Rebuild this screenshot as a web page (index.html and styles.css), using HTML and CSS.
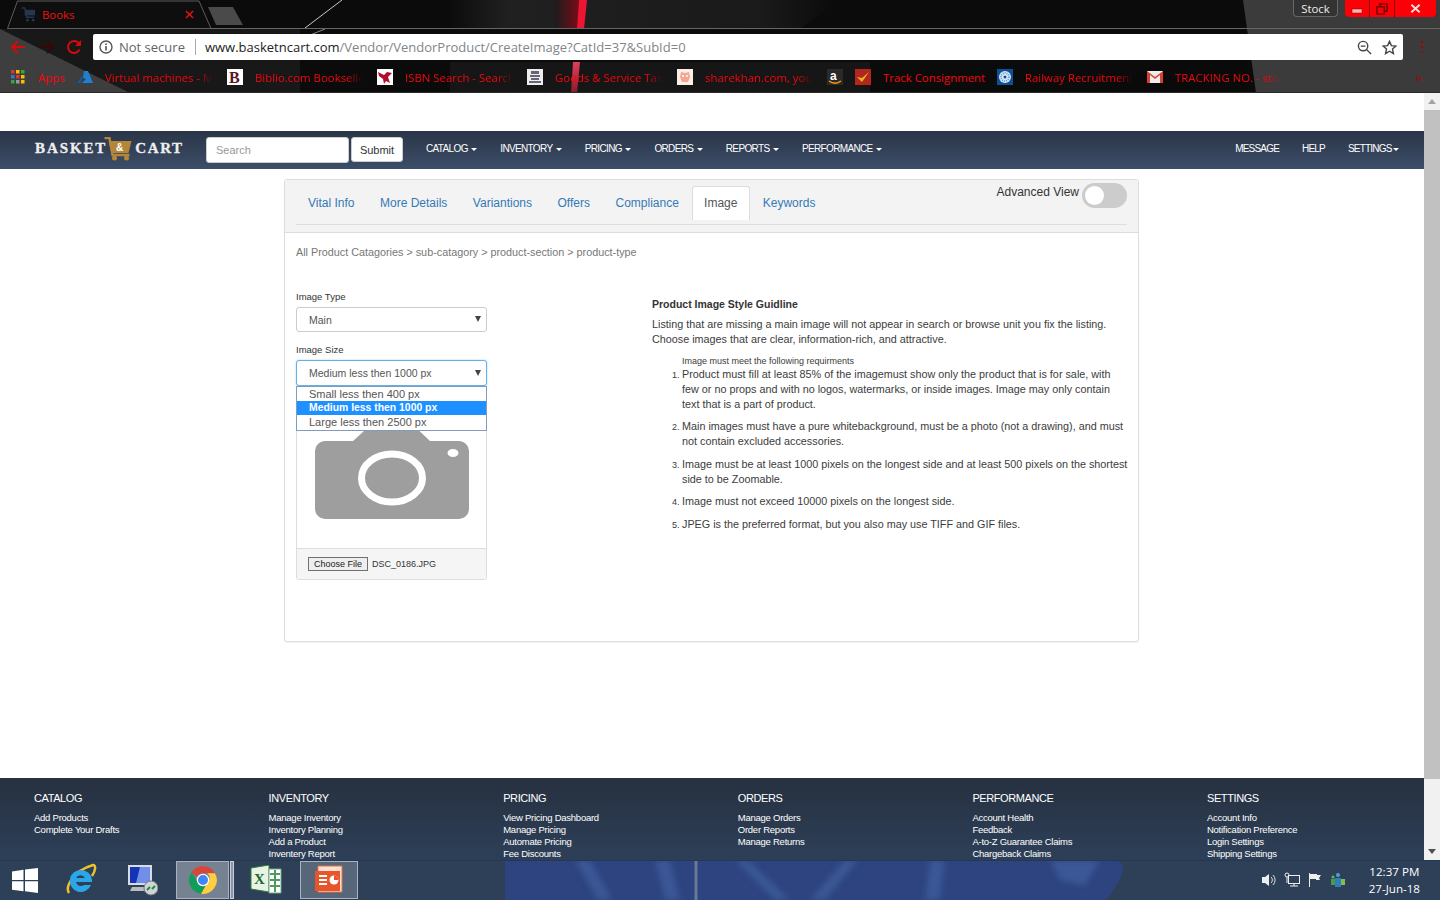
FILE: index.html
```html
<!DOCTYPE html>
<html lang="en">
<head>
<meta charset="utf-8">
<title>Books</title>
<link rel="stylesheet" href="styles.css">
</head>
<body>
<header class="browser">
  <svg class="browser-bg" viewBox="0 0 1440 93" preserveAspectRatio="none" aria-hidden="true">
    <defs>
      <linearGradient id="glow" x1="0" x2="1" y1="0" y2="0">
        <stop offset="0" stop-color="#1c1c1c"/><stop offset="1" stop-color="#7a0c18"/>
      </linearGradient>
      <linearGradient id="top" x1="0" x2="1" y1="0" y2="0">
        <stop offset="0" stop-color="#0c0c0c"/><stop offset=".15" stop-color="#202020"/><stop offset=".8" stop-color="#1a1a1a"/><stop offset="1" stop-color="#0a0a0a"/>
      </linearGradient>
      <linearGradient id="lower" x1="0" x2="0" y1="0" y2="1">
        <stop offset="0" stop-color="#e0405a"/><stop offset="1" stop-color="#8a1a2c"/>
      </linearGradient>
    </defs>
    <rect width="1440" height="93" fill="#0b0b0b"/>
    <rect x="0" y="29" width="300" height="64" fill="#181818"/>
    <polygon points="0,29 130,93 0,93" fill="#3e3e3e"/>
    <polygon points="450,0 840,0 800,29 450,29" fill="url(#top)"/>
    <rect x="450" y="62" width="420" height="31" fill="#161616"/>
    <polygon points="1243,0 1440,0 1440,93 1256,93" fill="#3b3b3b"/>
    <polygon points="1090,93 1246,93 1244,30" fill="#0a0a0a"/>
    <polygon points="555,0 579,0 577,29 555,29" fill="url(#glow)"/>
    <polygon points="579,0 587,0 584,29 577,29" fill="#ee1433"/>
    <polygon points="573,62 580,62 577,93 571,93" fill="url(#lower)"/>
    <polyline points="305,28 342,0" stroke="#c8c8c8" fill="none"/>
    <polyline points="278,48 325,29" stroke="#8a8a8a" fill="none"/>
    <polygon points="7.500,28.500 17.500,1 199,1 211,28.500" fill="#0e0e0e" stroke="#5c5c5c"/>
    <line x1="211" y1="28.500" x2="1440" y2="28.500" stroke="#666"/>
  </svg>
  <div class="tabstrip">
    <div class="tab">
      <svg class="tab-icon" viewBox="0 0 16 16" aria-hidden="true"><path d="M1 1h3l2 10h8" fill="none" stroke="#26364f" stroke-width="1.500"/><rect x="4" y="3" width="11" height="6" fill="#26364f"/><circle cx="7" cy="14" r="1.500" fill="#26364f"/><circle cx="13" cy="14" r="1.500" fill="#26364f"/></svg>
      <span class="tab-title">Books</span>
      <svg class="tab-close" viewBox="0 0 10 10" aria-hidden="true"><path d="M1 1l8 8M9 1l-8 8" stroke="#f01010" stroke-width="1.500"/></svg>
    </div>
    <div class="newtab"></div>
    <div class="winctl">
      <div class="stock">Stock</div>
      <div class="winbtns">
        <div class="winbtn win-min"><svg viewBox="0 0 12 6" aria-hidden="true"><rect x="1" y="1" width="10" height="4" fill="#f6b6b6" stroke="#8a0000" stroke-width=".5"/></svg></div>
        <div class="winbtn win-max"><svg viewBox="0 0 13 13" aria-hidden="true"><path d="M4 1h8v8h-3V4H4zM1 4h8v8H1z" fill="none" stroke="#700" stroke-width="1.600"/></svg></div>
        <div class="winbtn win-close"><svg viewBox="0 0 12 9" aria-hidden="true"><path d="M1.500 .5l9 8M10.500 .5l-9 8" stroke="#fdd" stroke-width="2.200"/></svg></div>
      </div>
    </div>
  </div>
  <div class="toolbar">
    <svg class="tool tool-back" viewBox="0 0 16 16" aria-hidden="true"><path d="M15 8H2M8 2L2 8l6 6" fill="none" stroke="#d60a0a" stroke-width="2"/></svg>
    <svg class="tool tool-fwd" viewBox="0 0 16 16" aria-hidden="true"><path d="M1 8h13M8 2l6 6-6 6" fill="none" stroke="#380808" stroke-width="2"/></svg>
    <svg class="tool tool-reload" viewBox="0 0 16 16" aria-hidden="true"><path d="M13.500 10.500A6 6 0 1 1 12.500 4" fill="none" stroke="#d60a0a" stroke-width="2"/><path d="M15 1v6H9z" fill="#d60a0a"/></svg>
    <div class="omnibox">
      <svg class="omni-info" viewBox="0 0 14 14" aria-hidden="true"><circle cx="7" cy="7" r="6" fill="none" stroke="#555" stroke-width="1.400"/><rect x="6.200" y="6" width="1.600" height="4.500" fill="#555"/><rect x="6.200" y="3.400" width="1.600" height="1.600" fill="#555"/></svg>
      <span class="omni-secure">Not secure</span>
      <span class="omni-sep"></span>
      <span class="omni-url"><b>www.basketncart.com</b>/Vendor/VendorProduct/CreateImage?CatId=37&amp;SubId=0</span>
      <svg class="omni-zoom" viewBox="0 0 16 16" aria-hidden="true"><circle cx="6.500" cy="6.500" r="5" fill="none" stroke="#444" stroke-width="1.500"/><path d="M4 6.500h5M10 10l5 5" stroke="#444" stroke-width="1.500"/></svg>
      <svg class="omni-star" viewBox="0 0 16 16" aria-hidden="true"><path d="M8 1.500l2 4.500 4.800.5-3.600 3.200 1 4.800L8 12l-4.200 2.500 1-4.800L1.200 6.500 6 6z" fill="none" stroke="#444" stroke-width="1.500"/></svg>
    </div>
    <svg class="tool-menu" viewBox="0 0 4 14" aria-hidden="true"><rect x="1" y="1" width="2" height="2" fill="#a00"/><rect x="1" y="6" width="2" height="2" fill="#a00"/><rect x="1" y="11" width="2" height="2" fill="#a00"/></svg>
  </div>
  <nav class="bookmarks">
    <svg class="bm-apps" viewBox="0 0 14 14" aria-hidden="true">
      <rect width="3.500" height="3.500" fill="#d33"/><rect x="5" width="3.500" height="3.500" fill="#fb0"/><rect x="10" width="3.500" height="3.500" fill="#3a3"/>
      <rect y="5" width="3.500" height="3.500" fill="#37c"/><rect x="5" y="5" width="3.500" height="3.500" fill="#d33"/><rect x="10" y="5" width="3.500" height="3.500" fill="#fb0"/>
      <rect y="10" width="3.500" height="3.500" fill="#3a3"/><rect x="5" y="10" width="3.500" height="3.500" fill="#999"/><rect x="10" y="10" width="3.500" height="3.500" fill="#fb0"/>
    </svg>
    <span class="bm-apps-text">Apps</span>
    <div class="bm bm-first">
      <svg class="bm-icon" viewBox="0 0 16 16" aria-hidden="true"><path d="M7 2h4l5 12H5l4-4-3-1z" fill="#1f7fd0"/><path d="M6 5L0 14h4z" fill="#0f5aa0"/></svg>
      <span class="bm-text">Virtual machines - M</span>
    </div>
    <div class="bm">
      <svg class="bm-icon" viewBox="0 0 16 16" aria-hidden="true"><rect width="16" height="16" fill="#fff"/><text x="2" y="14" class="fav-b">B</text></svg>
      <span class="bm-text">Biblio.com Bookselle</span>
    </div>
    <div class="bm">
      <svg class="bm-icon" viewBox="0 0 16 16" aria-hidden="true"><rect width="16" height="16" fill="#fff"/><path d="M1 3l6 3 3-3 5 1-4 4 2 6-4-2-2 3-1-5-4-3z" fill="#b30c2e"/></svg>
      <span class="bm-text">ISBN Search - Search</span>
    </div>
    <div class="bm">
      <svg class="bm-icon" viewBox="0 0 16 16" aria-hidden="true"><rect width="16" height="16" fill="#eee"/><path d="M4 2h8v3H4zM3 6h10v2H3zM4 9h8v2H4zM2 12h12v2H2z" fill="#667"/></svg>
      <span class="bm-text">Goods &amp; Service Tax</span>
    </div>
    <div class="bm">
      <svg class="bm-icon" viewBox="0 0 16 16" aria-hidden="true"><rect width="16" height="16" fill="#fdeee8"/><path d="M4 3l4 1 4-1 1 5-2 5H5L3 8z" fill="#f6a690"/><circle cx="6" cy="7" r="1" fill="#fff"/><circle cx="10" cy="7" r="1" fill="#fff"/></svg>
      <span class="bm-text">sharekhan.com, your</span>
    </div>
    <div class="bm bm-icononly">
      <svg class="bm-icon" viewBox="0 0 16 16" aria-hidden="true"><rect width="16" height="16" fill="#2a2a2a"/><text x="3" y="10.500" class="fav-a">a</text><path d="M2 12c4 3 8 3 12 0" fill="none" stroke="#f90" stroke-width="1.500"/></svg>
    </div>
    <div class="bm bm-track-item">
      <svg class="bm-icon" viewBox="0 0 16 16" aria-hidden="true"><rect width="16" height="16" fill="#b3261e"/><path d="M2 8l5 5 7-10-7 6z" fill="#e8b12a"/></svg>
      <span class="bm-text bm-track">Track Consignment</span>
    </div>
    <div class="bm">
      <svg class="bm-icon" viewBox="0 0 16 16" aria-hidden="true"><rect width="16" height="16" fill="#0c4f9a"/><circle cx="8" cy="8" r="6" fill="#dfeaf5"/><circle cx="8" cy="8" r="4" fill="none" stroke="#6a9ccb" stroke-width="2" stroke-dasharray="1 1"/><circle cx="8" cy="8" r="1.500" fill="#0c4f9a"/></svg>
      <span class="bm-text">Railway Recruitment</span>
    </div>
    <div class="bm">
      <svg class="bm-icon" viewBox="0 0 16 16" aria-hidden="true"><rect y="2" width="16" height="12" fill="#eee"/><path d="M0 2l8 6 8-6v12h-3V6L8 10 3 6v8H0z" fill="#d8402f"/></svg>
      <span class="bm-text">TRACKING NO. - sto</span>
    </div>
    <span class="bm-more">»</span>
  </nav>
</header>

<div class="viewport">
  <div class="page">
    <div class="topgap"></div>
    <nav class="navbar">
      <a class="logo"><span class="logo-word">BASKET</span>
        <svg class="logo-cart" viewBox="0 0 28 24" aria-hidden="true"><path d="M0 1h5l3 17h17" fill="none" stroke="#b3863a" stroke-width="2.400"/><path d="M4 4h23l-3 12H7z" fill="#b3863a"/><circle cx="10" cy="21" r="2.500" fill="#b3863a"/><circle cx="22" cy="21" r="2.500" fill="#b3863a"/><text x="11.500" y="14" class="logo-amp">&amp;</text></svg>
        <span class="logo-word logo-word-2">CART</span></a>
      <input class="nav-search" type="text" placeholder="Search">
      <button class="nav-submit" type="button">Submit</button>
      <ul class="nav-menu">
        <li>CATALOG <i class="caret"></i></li>
        <li>INVENTORY <i class="caret"></i></li>
        <li>PRICING <i class="caret"></i></li>
        <li>ORDERS <i class="caret"></i></li>
        <li>REPORTS <i class="caret"></i></li>
        <li>PERFORMANCE <i class="caret"></i></li>
      </ul>
      <ul class="nav-menu nav-right">
        <li>MESSAGE</li>
        <li>HELP</li>
        <li>SETTINGS<i class="caret"></i></li>
      </ul>
    </nav>

    <main class="card">
      <div class="card-head">
        <div class="tabrow">
          <ul class="tabs">
            <li>Vital Info</li>
            <li>More Details</li>
            <li>Variantions</li>
            <li>Offers</li>
            <li>Compliance</li>
            <li class="active">Image</li>
            <li>Keywords</li>
          </ul>
          <div class="adv">
            <span>Advanced View</span>
            <span class="toggle"><span class="knob"></span></span>
          </div>
        </div>
      </div>
      <div class="card-body">
        <p class="crumbs">All Product Catagories &gt; sub-catagory &gt; product-section &gt; product-type</p>
        <div class="cols">
          <form class="form">
            <label class="lbl">Image Type</label>
            <div class="sel">Main<i class="sel-arrow"></i></div>
            <label class="lbl lbl-2">Image Size</label>
            <div class="sel-wrap">
              <div class="sel sel-focus">Medium less then 1000 px<i class="sel-arrow"></i></div>
              <ul class="sel-menu">
                <li>Small less then 400 px</li>
                <li class="on">Medium less then 1000 px</li>
                <li>Large less then 2500 px</li>
              </ul>
            </div>
            <div class="imgbox">
              <div class="imgbox-pic">
                <svg class="camera" viewBox="0 0 154 120" aria-hidden="true">
                  <path d="M10 37h28l22-20h34l21 20h29a10 10 0 0 1 10 10v58a10 10 0 0 1-10 10H10a10 10 0 0 1-10-10V47a10 10 0 0 1 10-10z" fill="#9e9e9e"/>
                  <ellipse cx="77" cy="74" rx="30.500" ry="24" fill="#9e9e9e" stroke="#fff" stroke-width="7"/>
                  <ellipse cx="138" cy="49" rx="5.500" ry="4" fill="#fff"/>
                </svg>
              </div>
              <div class="imgbox-foot">
                <button class="choose" type="button">Choose File</button>
                <span class="filename">DSC_0186.JPG</span>
              </div>
            </div>
          </form>
          <section class="guide">
            <h4>Product Image Style Guidline</h4>
            <p>Listing that are missing a main image will not appear in search or browse unit you fix the listing.<br>Choose images that are clear, information-rich, and attractive.</p>
            <div class="guide-small">Image must meet the following requirments</div>
            <ol>
              <li>Product must fill at least 85% of the imagemust show only the product that is for sale, with few or no props and with no logos, watermarks, or inside images. Image may only contain text that is a part of product.</li>
              <li>Main images must have a pure whitebackground, must be a photo (not a drawing), and must not contain excluded accessories.</li>
              <li>Image must be at least 1000 pixels on the longest side and at least 500 pixels on the shortest side to be Zoomable.</li>
              <li>Image must not exceed 10000 pixels on the longest side.</li>
              <li>JPEG is the preferred format, but you also may use TIFF and GIF files.</li>
            </ol>
          </section>
        </div>
      </div>
    </main>

    <div class="spacer"></div>

    <footer class="footer">
      <div class="fcol"><h5>CATALOG</h5><a>Add Products</a><a>Complete Your Drafts</a></div>
      <div class="fcol"><h5>INVENTORY</h5><a>Manage Inventory</a><a>Inventory Planning</a><a>Add a Product</a><a>Inventery Report</a></div>
      <div class="fcol"><h5>PRICING</h5><a>View Pricing Dashboard</a><a>Manage Pricing</a><a>Automate Pricing</a><a>Fee Discounts</a></div>
      <div class="fcol"><h5>ORDERS</h5><a>Manage Orders</a><a>Order Reports</a><a>Manage Returns</a></div>
      <div class="fcol"><h5>PERFORMANCE</h5><a>Account Health</a><a>Feedback</a><a>A-to-Z Guarantee Claims</a><a>Chargeback Claims</a></div>
      <div class="fcol"><h5>SETTINGS</h5><a>Account Info</a><a>Notification Preference</a><a>Login Settings</a><a>Shipping Settings</a></div>
    </footer>
  </div>
  <div class="scrollbar">
    <div class="sb-btn"><i class="sb-up"></i></div>
    <div class="sb-track"><div class="sb-thumb"></div></div>
    <div class="sb-btn"><i class="sb-down"></i></div>
  </div>
</div>

<div class="taskbar">
  <svg class="task-bg" viewBox="0 0 1440 40" preserveAspectRatio="none" aria-hidden="true">
    <defs>
      <filter id="soft" x="-20%" y="-20%" width="140%" height="140%"><feGaussianBlur stdDeviation="3"/></filter>
      <clipPath id="jacket"><path d="M505 0H1116Q1126 4 1122 14Q1116 28 1106 40H505z"/></clipPath>
    </defs>
    <path d="M505 0H1116Q1126 4 1122 14Q1116 28 1106 40H505z" fill="#2d4480"/>
    <g clip-path="url(#jacket)"><g filter="url(#soft)" fill="#43609f" opacity=".7">
      <polygon points="575,0 590,0 612,40 598,40"/>
      <polygon points="655,0 670,0 680,40 665,40"/>
      <polygon points="735,0 748,0 790,40 775,40"/>
      <polygon points="845,0 858,0 825,40 810,40"/>
      <polygon points="930,0 945,0 940,40 925,40"/>
      <polygon points="1050,0 1100,0 1085,26 1060,20"/>
    </g></g>
    <rect class="task-zip" x="694.500" y="0" width="3" height="40"/>
    <rect x="0" y="0" width="1440" height="1" fill="#26384e"/>
  </svg>
  <svg class="t-win" viewBox="0 0 26 25" aria-hidden="true"><path d="M0 3.500l11.500-1.700V12H0zM13 1.600L26 0v12H13zM0 13.300h11.500v10L0 21.700zM13 13.300h13V25l-13-1.800z" fill="#fff"/></svg>
  <svg class="t-app t-ie" viewBox="0 0 32 34" aria-hidden="true">
    <path d="M4 30C0 24 8 8 28 2c3 0 3 5-1 11" fill="none" stroke="#eec22a" stroke-width="2.500"/>
    <path d="M16 7a11 11 0 1 0 10 15h-7a5 5 0 0 1-8-3h16V17A11 11 0 0 0 16 7zm-5 8a5 5 0 0 1 9 0z" fill="#2ba7e8"/>
  </svg>
  <svg class="t-app t-rdp" viewBox="0 0 32 34" aria-hidden="true">
    <rect x="2" y="2" width="24" height="20" fill="#d7dbe2"/><rect x="4" y="4" width="20" height="16" fill="#1533b5"/><path d="M14 4h10v16H10z" fill="#6f8fe8"/>
    <path d="M6 24h18l2 4H4z" fill="#bbb"/><circle cx="25" cy="25" r="7" fill="#cfd4d8" stroke="#777"/><path d="M21 27l3-3M26 26l3-3" stroke="#1f8a3c" stroke-width="2"/>
  </svg>
  <div class="t-box t-chrome">
    <svg class="t-icon" viewBox="0 0 48 48" aria-hidden="true">
      <path d="M24 2a22 22 0 0 1 19 11H24a11 11 0 0 0-10 6L6 11A22 22 0 0 1 24 2z" fill="#db4437"/>
      <path d="M6 11l9 16a11 11 0 0 0 13 6l-7 13A22 22 0 0 1 6 11z" fill="#0f9d58"/>
      <path d="M43 13a22 22 0 0 1-22 33l9-16a11 11 0 0 0 1-17z" fill="#ffcd40"/>
      <circle cx="24" cy="24" r="9" fill="#4285f4" stroke="#fff" stroke-width="2"/>
    </svg>
  </div>
  <div class="t-sliver"></div>
  <svg class="t-app t-xl" viewBox="0 0 32 30" aria-hidden="true">
    <path d="M1 3l18-3v27L1 24z" fill="#e9f3e5" stroke="#2d7d3c"/><path d="M19 4h12v24H19z" fill="#fff" stroke="#6fa87a"/><path d="M20 9h10M20 15h10M20 21h10M25 5v22" stroke="#4f9a5e" stroke-width="2"/>
    <text x="4" y="19" class="fav-x">X</text>
  </svg>
  <div class="t-box t-ppt">
    <svg class="t-icon-ppt" viewBox="0 0 30 30" aria-hidden="true">
      <path d="M4 1h24v26H4z" fill="#fbe0d5" stroke="#e87040"/><path d="M1 6h25v20H1z" fill="#e8552a"/>
      <path d="M5 11h8M5 15h8M5 19h8" stroke="#fff" stroke-width="1.800"/><circle cx="20" cy="15" r="4.500" fill="#fff"/><path d="M20 15v-4.500a4.500 4.500 0 0 1 4.500 4.500z" fill="#e8552a"/>
    </svg>
  </div>
  <div class="tray">
    <svg class="tray-i" viewBox="0 0 16 16" aria-hidden="true"><path d="M1 5h3l4-3v12l-4-3H1z" fill="#eee"/><path d="M10 5a4 4 0 0 1 0 6M12 3a7 7 0 0 1 0 10" fill="none" stroke="#ddd"/></svg>
    <svg class="tray-i" viewBox="0 0 16 16" aria-hidden="true"><rect x="4.500" y="3.500" width="11" height="8" fill="none" stroke="#eee"/><path d="M6 14h8M10 12v2" stroke="#eee"/><circle cx="3" cy="3" r="2" fill="none" stroke="#eee"/><path d="M3 5v6" stroke="#eee"/></svg>
    <svg class="tray-i" viewBox="0 0 16 16" aria-hidden="true"><path d="M2.500 1v14" stroke="#eee"/><path d="M3 2h7v1h4l-2 3 1 2H9V7H3z" fill="#eee"/></svg>
    <svg class="tray-i" viewBox="0 0 16 16" aria-hidden="true"><circle cx="8" cy="3" r="2" fill="#5b9bd5"/><path d="M5 6h6v9H5z" fill="#2d7fb8"/><circle cx="3" cy="5" r="1.500" fill="#5cb85c"/><path d="M1 7h4v6H1z" fill="#4a9a4a"/><path d="M11 7h4v6h-4z" fill="#7fbf4a"/></svg>
    <div class="clock"><span>12:37 PM</span><span>27-Jun-18</span></div>
  </div>
</div>
</body>
</html>
```
FILE: styles.css
```css
* { box-sizing: border-box; }
html, body { margin: 0; height: 900px; overflow: hidden; }
body { display: flex; flex-direction: column; font-family: "Liberation Sans", Arial, sans-serif; background: #fff; color: #333; }
ul, ol { margin: 0; padding: 0; list-style: none; }
p, h4, h5 { margin: 0; }

/* Browser frame */
.browser { position: relative; height: 93px; flex: none; overflow: hidden; border-bottom: 1px solid #2a2a2a; }
.browser-bg { position: absolute; left: 0; top: 0; width: 1440px; height: 93px; }
.tabstrip, .toolbar, .bookmarks { position: relative; display: flex; align-items: center; }
.tabstrip { height: 29px; }
.tab { width: 208px; height: 29px; display: flex; align-items: center; padding: 0 14px 0 21px; }
.tab-icon { width: 15px; height: 15px; }
.tab-title { margin-left: 6px; flex: 1; font: 11.400px "Open Sans", sans-serif; color: #f01010; }
.tab-close { width: 9px; height: 9px; }
.newtab { width: 35px; height: 18px; align-self: flex-start; margin-top: 7px; background: #4a4a4a; clip-path: polygon(0 0, 25px 0, 35px 18px, 8px 18px); }
.winctl { margin-left: auto; margin-right: 4px; align-self: flex-start; display: flex; gap: 7px; }
.stock { width: 45px; height: 17px; border: 1px solid #666; border-top: 0; border-radius: 0 0 4px 4px; background: #333; color: #eee; font: 11.400px/18px "Open Sans", sans-serif; text-align: center; }
.winbtns { display: flex; height: 17px; border-radius: 0 0 4px 4px; overflow: hidden; background: #8a0000; gap: 1px; }
.winbtn { display: flex; align-items: center; justify-content: center; background: #fb0007; }
.win-min { width: 24px; } .win-min svg { width: 12px; height: 6px; margin-top: 5px; }
.win-max { width: 24px; } .win-max svg { width: 12px; height: 12px; }
.win-close { width: 41px; } .win-close svg { width: 11px; height: 9px; }

.toolbar { height: 33px; padding: 3px 0 0 10px; }
.tool { width: 16px; height: 16px; flex: none; }
.tool-fwd { margin-left: 13px; }
.tool-reload { margin-left: 11px; }
.omnibox { margin-left: 11px; width: 1310px; height: 26px; display: flex; align-items: center; padding: 0 6px; background: #fff; border-radius: 2px; font: 13px "Open Sans", sans-serif; color: #80868b; }
.omni-info { width: 14px; height: 14px; flex: none; }
.omni-secure { margin-left: 6px; color: #5f6368; }
.omni-sep { width: 1px; height: 16px; background: #aaa; margin: 0 9px 0 10px; }
.omni-url b { font-weight: 400; color: #222; }
.omni-zoom { margin-left: auto; width: 15px; height: 15px; }
.omni-star { margin-left: 10px; width: 15px; height: 15px; }
.tool-menu { margin-left: 17px; width: 4px; height: 14px; }

.bookmarks { height: 30px; padding-left: 11px; font: 11.400px "Open Sans", sans-serif; color: #f5050f; }
.bm-apps { width: 14px; height: 14px; flex: none; }
.bm-apps-text { margin-left: 13px; width: 28px; flex: none; }
.bm { display: flex; align-items: center; flex: none; margin-right: 14px; }
.bm-first { margin-left: 11px; }
.bm-icon { width: 16px; height: 16px; flex: none; }
.bm-text { margin-left: 12px; width: 108px; white-space: nowrap; mask-image: linear-gradient(90deg, #000 85%, transparent); }
.bm-icononly { margin-right: 12px; }
.bm-track-item { margin-right: 12px; }
.bm-track { width: 102px; mask-image: none; }
.bm-more { margin-left: auto; margin-right: 18px; font-size: 13px; color: #a00; }
.fav-b { font: 700 16px "Liberation Serif", serif; fill: #5a1626; }
.fav-a { font: 700 12px "Liberation Sans", sans-serif; fill: #fff; }
.fav-x { font: 700 15px "Liberation Serif", serif; fill: #1e6b2f; }

/* Page */
.viewport { height: 767px; flex: none; display: flex; }
.page { width: 1424px; height: 767px; overflow: hidden; display: flex; flex-direction: column; }
.topgap { height: 38px; flex: none; }

.navbar { height: 38px; flex: none; display: flex; align-items: center; padding-left: 35px; background: linear-gradient(#2a3547, #3c4e69); }
.logo { display: flex; align-items: center; width: 171px; margin-top: -3px; }
.logo-word { font: 700 15px "Liberation Serif", serif; letter-spacing: 1.900px; color: #eee; -webkit-text-stroke: .3px #eee; }
.logo-word-2 { letter-spacing: 1.600px; }
.logo-cart { width: 29px; height: 24px; margin: 0 2px 0 -3px; }
.logo-amp { font: 700 10px "Liberation Sans", sans-serif; fill: #fff; }
.nav-search { width: 143px; height: 26px; padding: 0 9px; border: 1px solid #ccc; border-radius: 3px; background: #fff; font: 11px "Liberation Sans", sans-serif; color: #333; }
.nav-search::placeholder { color: #999; }
.nav-submit { width: 52px; height: 25px; align-self: flex-start; margin: 6px 12px 0 2px; border: 1px solid #ccc; border-radius: 3px; background: #fff; font: 11px "Liberation Sans", sans-serif; color: #333; padding: 0; }
.nav-menu { display: flex; gap: 23px; padding-left: 11px; margin-top: -3px; font-size: 10px; letter-spacing: -.65px; color: #fff; }
.nav-right { margin-left: auto; padding-right: 25px; letter-spacing: -.8px; }
.nav-menu li { white-space: nowrap; }
.caret { display: inline-block; vertical-align: middle; margin-left: 1.400px; border-top: 3px solid #fff; border-left: 3px solid transparent; border-right: 3px solid transparent; }

.card { width: 855px; height: 463px; flex: none; margin: 10px 0 0 284px; background: #fff; border: 1px solid #ddd; border-radius: 3px; box-shadow: 0 1px 1px rgba(0,0,0,.05); }
.card-head { height: 53px; padding: 0 11px; background: #f3f3f3; border-bottom: 1px solid #ddd; border-radius: 3px 3px 0 0; }
.tabrow { height: 45px; display: flex; padding-top: 6px; border-bottom: 1px solid #ddd; }
.tabs { display: flex; margin-left: -.75px; font-size: 12px; color: #337ab7; }
.tabs li { height: 34px; padding: 0 11.750px; line-height: 32px; border: 1px solid transparent; border-bottom: 0; }
.tabs .active { padding: 0 11.500px; color: #555; background: #fff; border-color: #ddd; border-radius: 3px 3px 0 0; }
.adv { margin-left: auto; display: flex; align-items: flex-start; gap: 3px; margin-top: -3px; font-size: 12px; color: #333; }
.adv > span:first-child { margin-top: 2px; }
.toggle { width: 45px; height: 25px; border-radius: 13px; background: #ccc; padding: 3px; display: block; }
.knob { display: block; width: 19px; height: 19px; border-radius: 50%; background: #fff; }

.card-body { padding: 13px 11px 0; }
.crumbs { font-size: 10.800px; line-height: 12px; color: #777; }
.cols { display: flex; margin-top: 33px; }
.form { width: 191px; flex: none; }
.lbl { display: block; font-size: 9.500px; line-height: 12px; color: #333; }
.lbl-2 { margin-top: 12px; }
.sel { position: relative; margin-top: 4px; height: 25px; padding-left: 12px; border: 1px solid #ccc; border-radius: 3px; font-size: 10.500px; line-height: 24px; color: #555; background: #fff; }
.sel-wrap { position: relative; z-index: 2; }
.sel-focus { margin-top: 4px; height: 26px; border-color: #66afe9; box-shadow: 0 0 2px rgba(102,175,233,.6); }
.sel-arrow { position: absolute; right: 5px; top: 8px; border-top: 6px solid #444; border-left: 3px solid transparent; border-right: 3px solid transparent; }
.sel-focus .sel-arrow { top: 9px; }
.sel-menu { position: absolute; left: 0; right: 0; top: 26px; height: 45px; background: #fff; border: 1px solid #7f9db9; font-size: 11px; line-height: 14px; color: #555; }
.sel-menu li { padding-left: 12px; }
.sel-menu .on { background: #1e90ff; color: #fff; font-weight: 700; font-size: 10.400px; }
.imgbox { margin-top: 9px; height: 185px; border: 1px solid #ddd; border-top: 0; border-radius: 0 0 3px 3px; display: flex; flex-direction: column; }
.imgbox-pic { flex: 1; padding: 9px 0 0 18px; overflow: hidden; }
.camera { display: block; width: 154px; height: 120px; }
.imgbox-foot { height: 31px; flex: none; display: flex; align-items: center; padding-left: 11px; background: #f5f5f5; border-top: 1px solid #ddd; font-size: 9px; color: #333; }
.choose { height: 14px; width: 60px; padding: 0; border: 1px solid #707070; background: #eee; font: 9px "Liberation Sans", sans-serif; color: #222; }
.filename { margin-left: 4px; }

.guide { flex: none; margin-left: 165px; width: 478px; font-size: 10.800px; line-height: 15px; color: #3c3c3c; }
.guide h4 { margin-top: 6px; font-size: 10.500px; font-weight: 700; color: #333; line-height: 14px; }
.guide p { margin-top: 6px; }
.guide-small { margin: 8px 0 0 30px; font-size: 9px; line-height: 12px; }
.guide ol { list-style: decimal; padding-left: 30px; }
.guide ol li { margin-bottom: 7.400px; }
.guide ol li::marker { font-size: 9px; }

.spacer { flex: 1; }
.footer { height: 82px; flex: none; overflow: hidden; display: grid; grid-template-columns: repeat(5, 234.600px) 1fr; padding: 14px 0 0 34px; background: linear-gradient(#273140, #2d3f58); color: #fff; }
.footer h5 { font-size: 11px; font-weight: 400; line-height: 13px; letter-spacing: -.4px; margin-bottom: 7px; }
.fcol a { display: block; font-size: 9.500px; line-height: 12px; letter-spacing: -.25px; }

/* Scrollbar */
.scrollbar { width: 16px; flex: none; display: flex; flex-direction: column; background: #f1f1f1; }
.sb-btn { height: 17px; flex: none; display: flex; align-items: center; justify-content: center; }
.sb-up { border-bottom: 5px solid #a3a3a3; border-left: 4px solid transparent; border-right: 4px solid transparent; }
.sb-down { border-top: 5px solid #505050; border-left: 4px solid transparent; border-right: 4px solid transparent; }
.sb-track { flex: 1; }
.sb-thumb { height: 669px; background: #c1c1c1; }

/* Taskbar */
.taskbar { position: relative; height: 40px; flex: none; display: flex; align-items: center; background: #2d4058; color: #fff; }
.task-bg { position: absolute; left: 0; top: 0; width: 1440px; height: 40px; }
.task-zip { fill: #6a7a9c; stroke: #4a5c84; stroke-dasharray: 2 1; }
.taskbar > * { position: relative; }
.taskbar > .task-bg { position: absolute; }
.t-win { width: 26px; height: 25px; margin-left: 12px; flex: none; }
.t-app { width: 32px; height: 34px; flex: none; }
.t-ie { margin-left: 27px; }
.t-rdp { margin-left: 29px; }
.t-box { height: 38px; display: flex; align-items: center; justify-content: center; border: 1px solid #aab2bf; background: rgba(255,255,255,.35); flex: none; }
.t-chrome { width: 53px; margin-left: 18px; }
.t-icon { width: 30px; height: 30px; }
.t-sliver { width: 4px; height: 38px; margin-left: 1px; background: #8a93a3; border: 1px solid #ccd; flex: none; }
.t-xl { margin-left: 16px; height: 30px; }
.t-ppt { width: 58px; margin-left: 18px; background: rgba(255,255,255,.2); }
.t-icon-ppt { width: 30px; height: 30px; }
.tray { margin-left: auto; display: flex; align-items: center; gap: 7px; padding-right: 20px; }
.tray-i { width: 16px; height: 16px; flex: none; }
.clock { display: flex; flex-direction: column; align-items: center; margin-left: 16px; font: 11.600px/17px "Open Sans", sans-serif; }
```
